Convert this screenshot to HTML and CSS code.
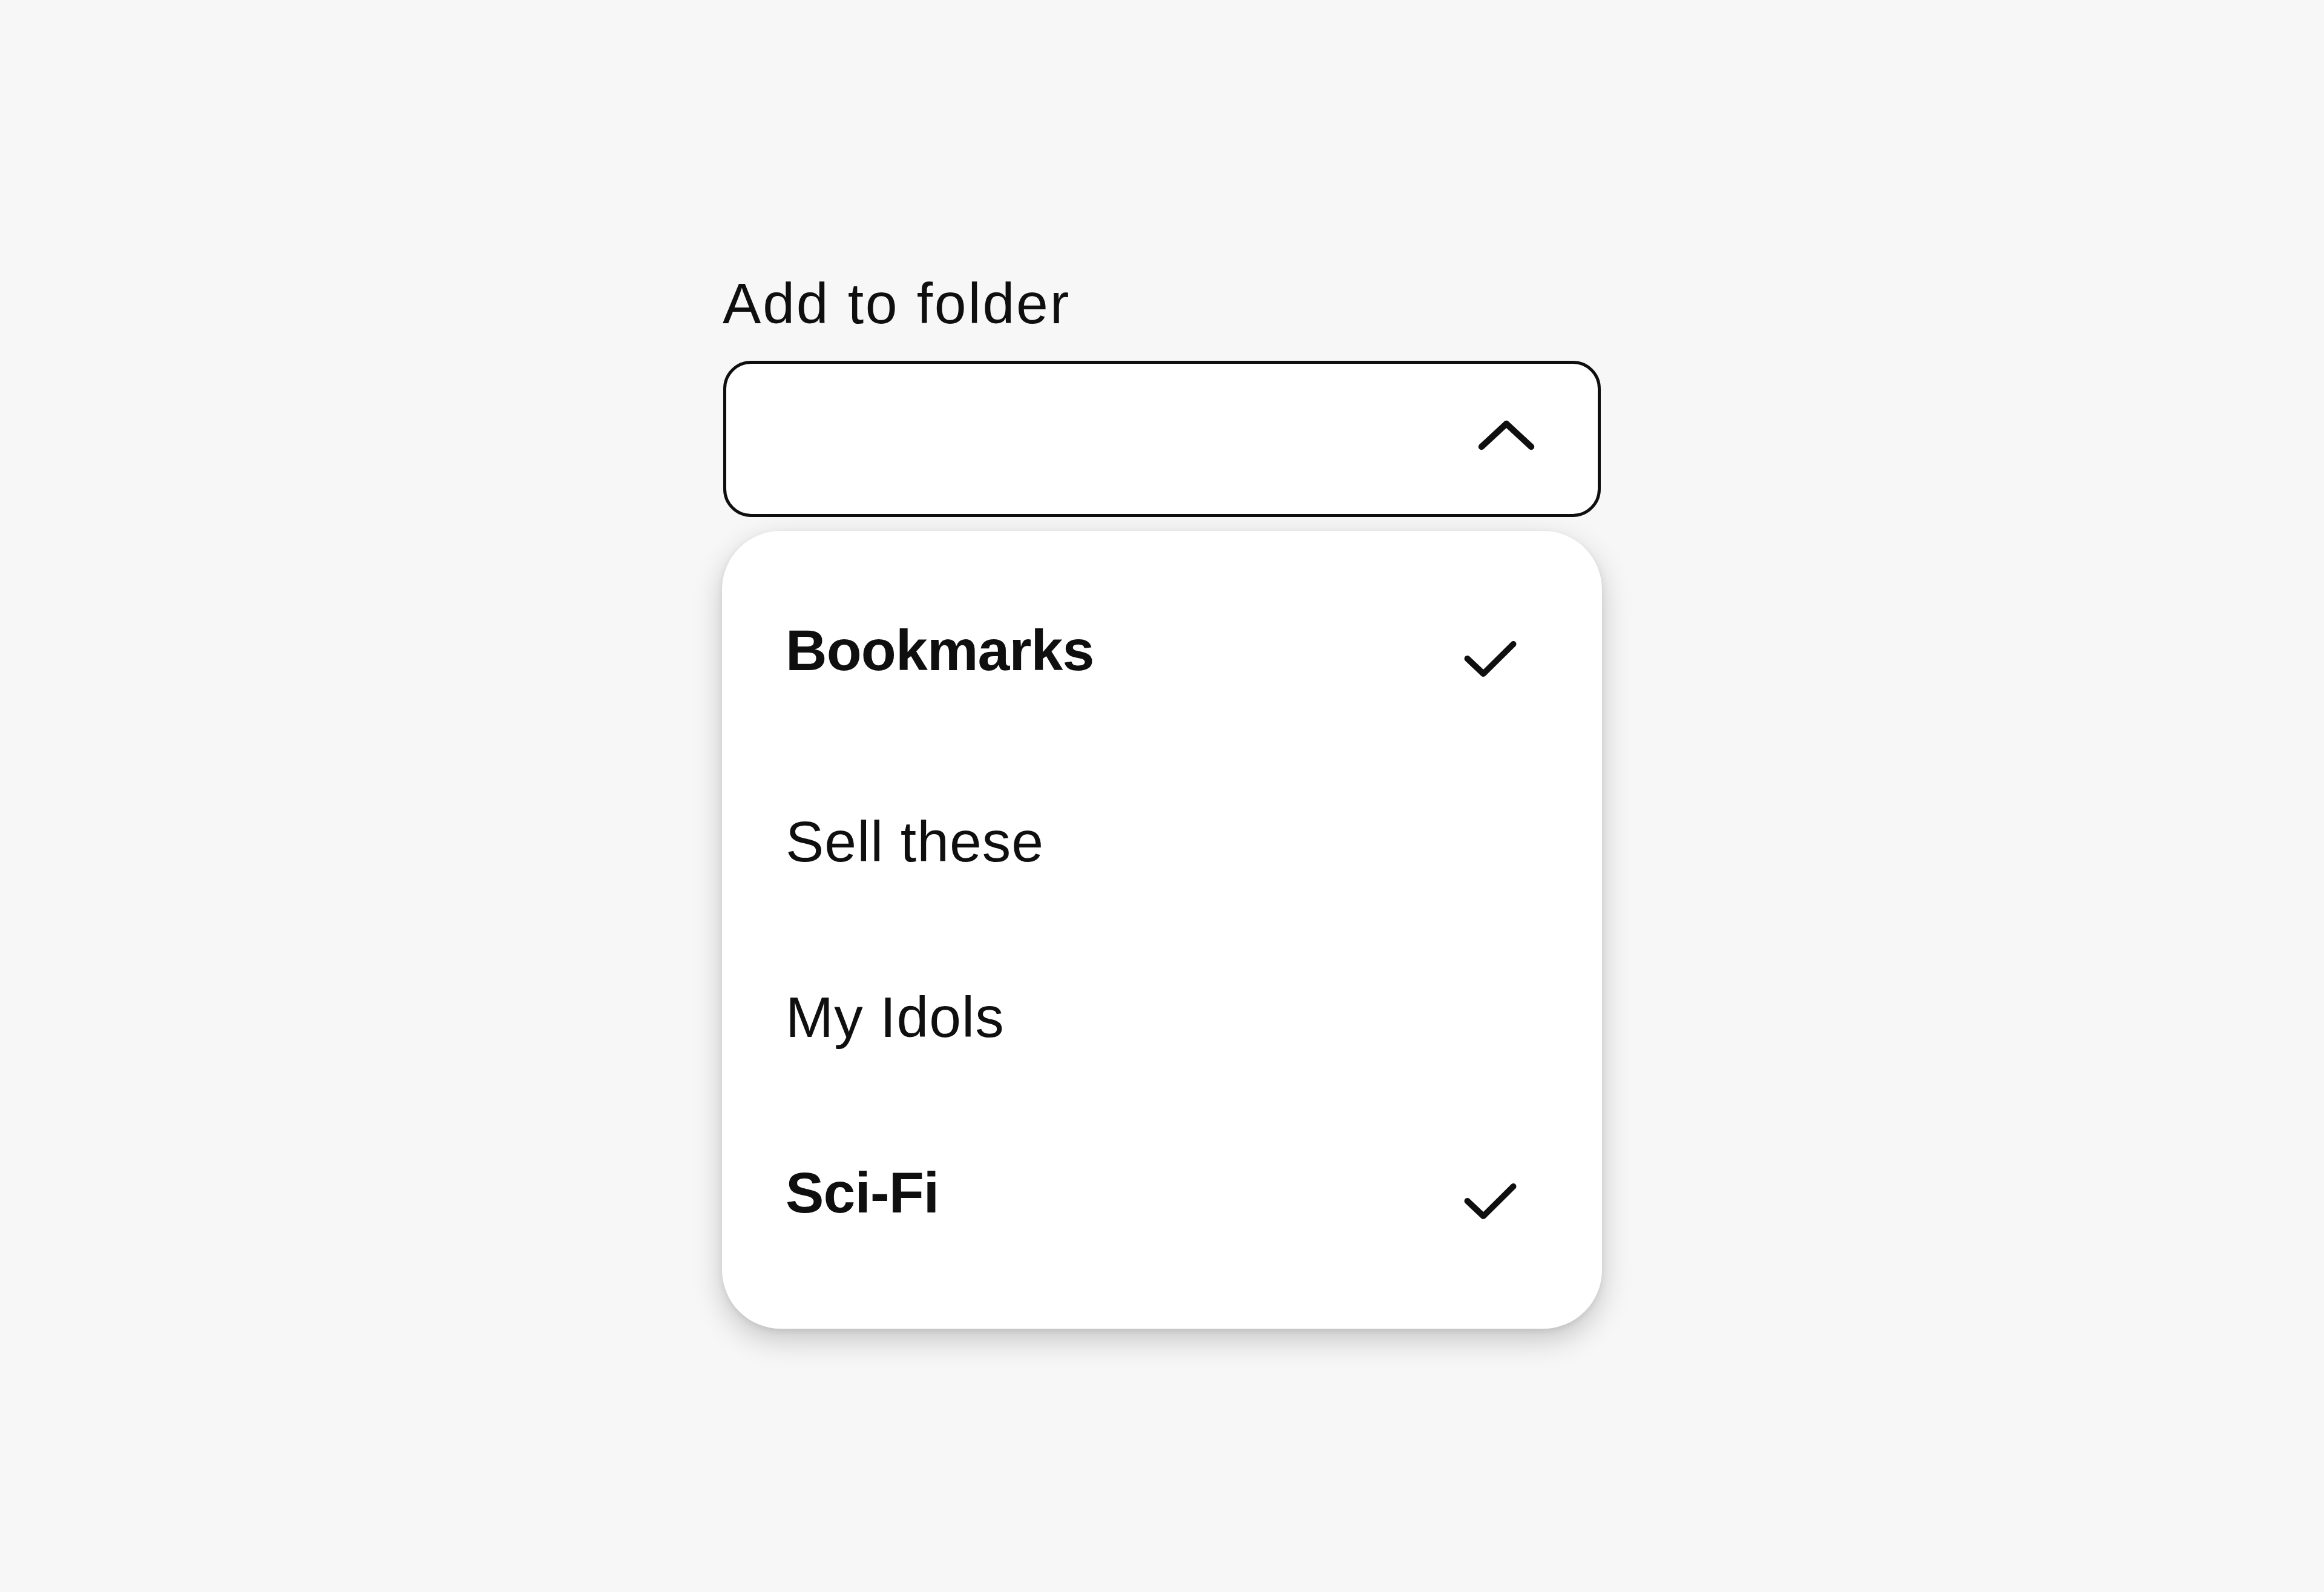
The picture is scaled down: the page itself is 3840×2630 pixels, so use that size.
FILE: index.html
```html
<!DOCTYPE html>
<html lang="en">
<head>
<meta charset="utf-8">
<title>Add to folder</title>
<link rel="stylesheet" href="styles.css">
</head>
<body>
<main class="page">
  <div class="field">
    <div class="field-label">Add to folder</div>
    <div class="select-box">
      <svg class="chevron" width="102" height="74" viewBox="0 0 102 74" aria-hidden="true">
        <polyline points="10,50 51,12 92,50" fill="none" stroke="#0f0f0f" stroke-width="10.5" stroke-linecap="round" stroke-linejoin="round"/>
      </svg>
    </div>
    <ul class="listbox">
      <li class="option option-checked">
        <span class="option-text">Bookmarks</span>
        <svg class="check" width="95" height="136" viewBox="0 0 95 136" aria-hidden="true">
          <polyline points="9.5,69 36,94 85.5,45" fill="none" stroke="#0f0f0f" stroke-width="10" stroke-linecap="round" stroke-linejoin="round"/>
        </svg>
      </li>
      <li class="option">
        <span class="option-text">Sell these</span>
      </li>
      <li class="option">
        <span class="option-text">My Idols</span>
      </li>
      <li class="option option-checked">
        <span class="option-text">Sci-Fi</span>
        <svg class="check" width="95" height="136" viewBox="0 0 95 136" aria-hidden="true">
          <polyline points="9.5,69 36,94 85.5,45" fill="none" stroke="#0f0f0f" stroke-width="10" stroke-linecap="round" stroke-linejoin="round"/>
        </svg>
      </li>
    </ul>
  </div>
</main>
</body>
</html>
```

FILE: styles.css
```css
html, body {
  margin: 0;
  padding: 0;
  background: #f7f7f7;
}

body {
  font-family: "Liberation Sans", Arial, sans-serif;
  color: #0f0f0f;
  min-height: 2630px;
}

.page {
  padding-top: 446px;
}

.field {
  width: 1454px;
  margin: 0 auto;
}

.field-label {
  font-size: 95px;
  line-height: 110px;
  letter-spacing: 2.8px;
  padding-left: 1px;
  margin-bottom: 40px;
}

.select-box {
  box-sizing: border-box;
  width: 1450px;
  height: 258px;
  margin: 0 2px;
  border: 5px solid #0f0f0f;
  border-radius: 46px;
  background: #ffffff;
  display: flex;
  align-items: center;
  justify-content: flex-end;
  padding-right: 100px;
}

.chevron {
  display: block;
}

.listbox {
  list-style: none;
  margin: 23px 0 0 0;
  padding: 52px 0 54px 0;
  background: #ffffff;
  border-radius: 97px;
  box-shadow: 0 18px 50px rgba(0, 0, 0, 0.2), 0 4px 12px rgba(0, 0, 0, 0.08);
  position: relative;
}

.option {
  display: flex;
  align-items: flex-start;
  justify-content: space-between;
  padding: 90px 137px 90px 105px;
}

.option-text {
  font-size: 95px;
  line-height: 110px;
  letter-spacing: 1px;
}

.option-checked .option-text {
  font-weight: 700;
  letter-spacing: -0.9px;
}

.check {
  display: block;
}
```
